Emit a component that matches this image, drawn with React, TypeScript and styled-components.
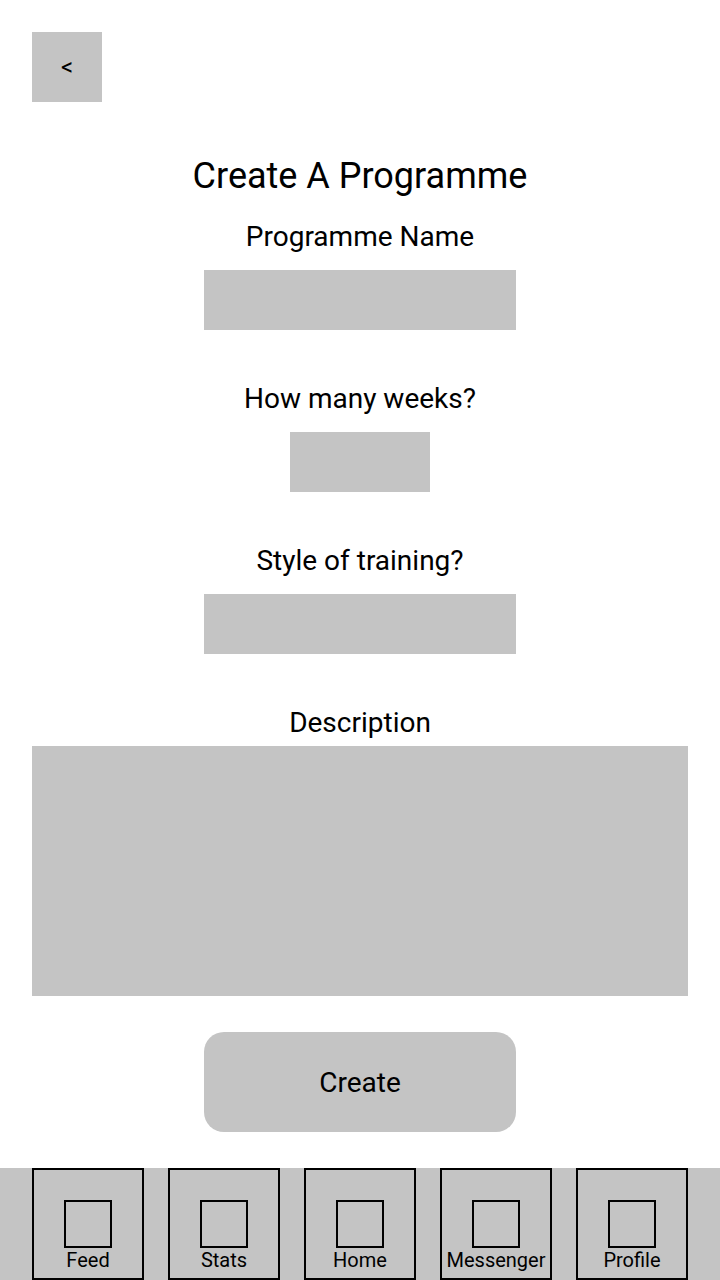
import styled, { createGlobalStyle } from 'styled-components';

const GlobalStyle = createGlobalStyle`
  html, body {
    margin: 0;
    padding: 0;
    background: #fff;
    font-family: Roboto, "Liberation Sans", sans-serif;
    color: #000;
  }
`;

const navItems = ['Feed', 'Stats', 'Home', 'Messenger', 'Profile'];

const App = () => {
  return (
    <Screen>
      <GlobalStyle />
      <Header>
        <BackBtn>&lt;</BackBtn>
      </Header>
      <Form>
        <Title>Create A Programme</Title>

        {/* fields */}
        <Label>Programme Name</Label>
        <Input $width={312} />

        <Label $top={53}>How many weeks?</Label>
        <Input $width={140} />

        <Label $top={53}>Style of training?</Label>
        <Input $width={312} />

        <Label $top={53} $gap={7}>Description</Label>
        <TextArea />

        <CreateBtn>Create</CreateBtn>
      </Form>
      <NavBar>
        {navItems.map((item) => (
          <NavItem key={item}>
            <NavIcon />
            <NavLabel>{item}</NavLabel>
          </NavItem>
        ))}
      </NavBar>
    </Screen>
  );
};

export default App;

const Screen = styled.div`
  width: 720px;
  height: 1280px;
  display: flex;
  flex-direction: column;
  overflow: hidden;
`;

const Header = styled.header`
  padding: 32px 32px 0;
  display: flex;
`;

const BackBtn = styled.button`
  width: 70px;
  height: 70px;
  border: none;
  background-color: #c4c4c4;
  font-family: Roboto, "Liberation Sans", sans-serif;
  font-size: 24px;
  color: #000;
  padding: 0;
`;

const Form = styled.main`
  display: flex;
  flex-direction: column;
  align-items: center;
  padding: 0 32px;
`;

const Title = styled.h1`
  margin: 53px 0 0;
  font-size: 36px;
  font-weight: 400;
  line-height: 42px;
`;

const Label = styled.label<{ $top?: number; $gap?: number }>`
  margin-top: ${(props) => props.$top ?? 24}px;
  margin-bottom: ${(props) => props.$gap ?? 17}px;
  font-size: 28px;
  line-height: 32px;
`;

const Input = styled.div<{ $width: number }>`
  width: ${(props) => props.$width}px;
  height: 60px;
  background-color: #c4c4c4;
`;

const TextArea = styled.div`
  width: 656px;
  height: 250px;
  background-color: #c4c4c4;
`;

const CreateBtn = styled.button`
  margin-top: 36px;
  width: 312px;
  height: 100px;
  border: none;
  border-radius: 20px;
  background-color: #c4c4c4;
  font-family: Roboto, "Liberation Sans", sans-serif;
  font-size: 28px;
  color: #000;
`;

const NavBar = styled.nav`
  margin-top: 36px;
  height: 112px;
  background-color: #c4c4c4;
  display: flex;
  gap: 24px;
  padding: 0 32px;
`;

const NavItem = styled.div`
  box-sizing: border-box;
  width: 112px;
  height: 112px;
  border: 2px solid #000;
  display: flex;
  flex-direction: column;
  align-items: center;
  padding-top: 30px;
`;

const NavIcon = styled.div`
  box-sizing: border-box;
  width: 48px;
  height: 48px;
  border: 2px solid #000;
`;

const NavLabel = styled.span`
  font-size: 20px;
  line-height: 24px;
`;
